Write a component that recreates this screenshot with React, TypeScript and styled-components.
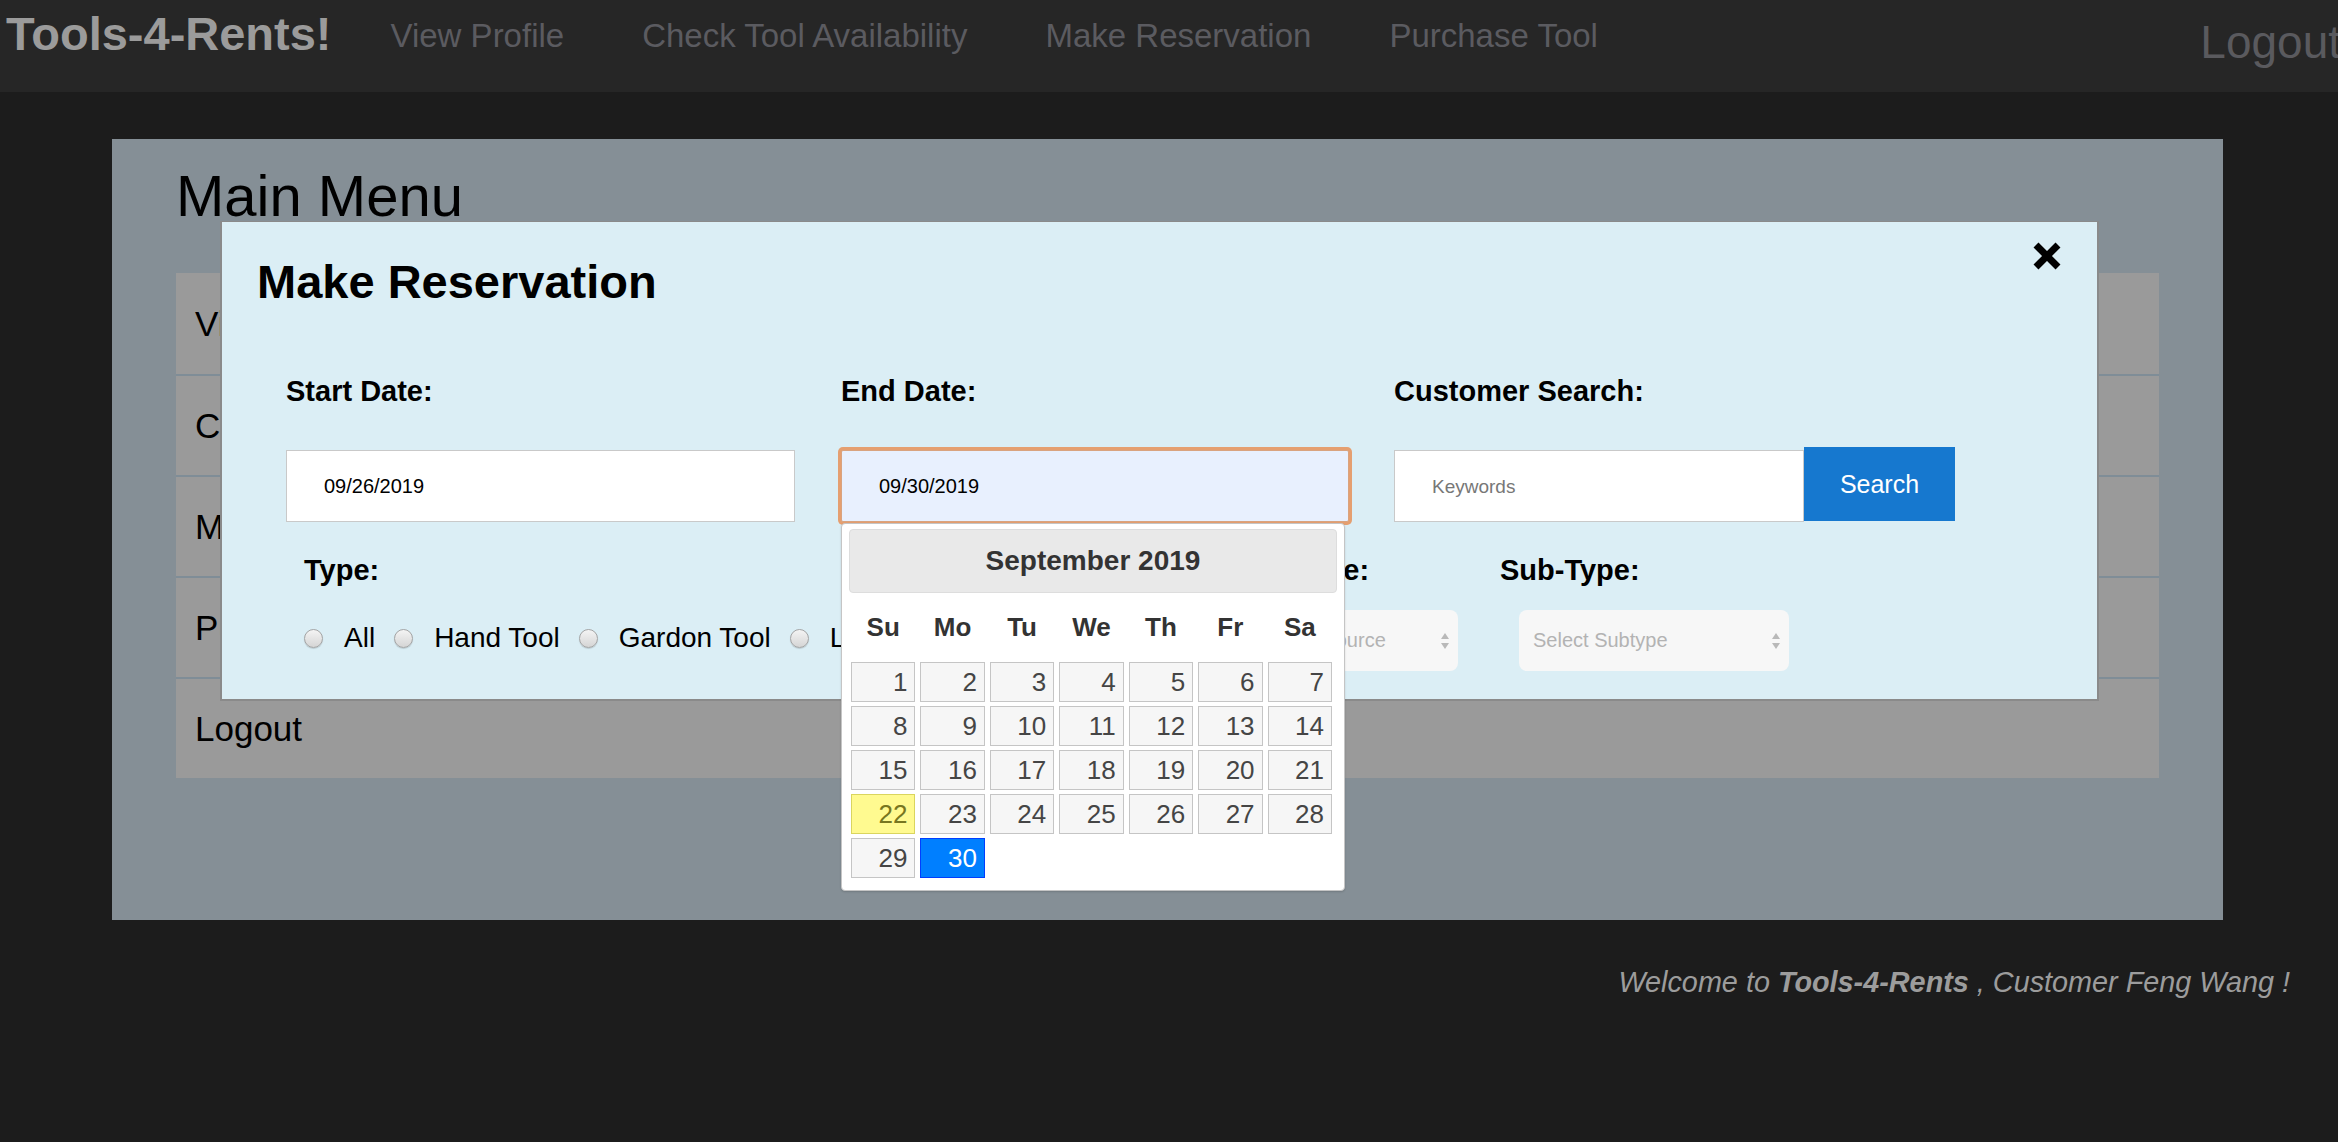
import styled, { createGlobalStyle } from 'styled-components';

const GlobalStyle = createGlobalStyle`
  html, body {
    margin: 0;
    padding: 0;
    background: #1c1c1c;
    overflow-x: hidden;
  }
  body {
    font-family: "Liberation Sans", Arial, Helvetica, sans-serif;
  }
  * {
    box-sizing: border-box;
  }
`;

const Page = styled.div`
  min-height: 100vh;
  background: #1c1c1c;
`;

const NavBar = styled.nav`
  display: flex;
  align-items: flex-start;
  height: 92px;
  background: #262626;
  overflow: hidden;
  white-space: nowrap;
`;

const Brand = styled.div`
  padding: 0 20px 0 6px;
  margin-top: 8px;
  font-size: 47px;
  line-height: 52px;
  font-weight: 700;
  color: #9b9b9b;
`;

const NavLink = styled.a`
  padding: 0 39px;
  margin-top: 18px;
  font-size: 33px;
  line-height: 36px;
  color: #5b5b60;
  text-decoration: none;
`;

const NavLogout = styled.a`
  margin-left: auto;
  margin-right: -3px;
  margin-top: 16px;
  font-size: 46px;
  line-height: 52px;
  color: #5a5a5e;
  text-decoration: none;
`;

const Main = styled.main`
  position: relative;
  padding-top: 47px;
`;

const Panel = styled.section`
  margin: 0 115px 0 112px;
  padding: 23px 64px 142px 64px;
  background: #858f96;
`;

const PanelTitle = styled.h1`
  margin: 0 0 44px 0;
  font-size: 58px;
  line-height: 67px;
  font-weight: 400;
  color: #000;
`;

const MenuList = styled.ul`
  list-style: none;
  margin: 0;
  padding: 0;
`;

const MenuItem = styled.li`
  display: flex;
  align-items: center;
  height: 101px;
  padding-left: 19px;
  background: #9a9a9a;
  font-size: 35px;
  color: #000;
  & + & {
    border-top: 2px solid #7f8d97;
  }
`;

const Welcome = styled.p`
  margin: 45px 0 0 0;
  padding-right: 48px;
  text-align: right;
  font-size: 28.8px;
  line-height: 34px;
  font-style: italic;
  color: #9c9c9c;
  b {
    font-weight: 700;
  }
`;

/* modal */

const Modal = styled.div`
  position: absolute;
  top: 129px;
  left: 220px;
  width: 1879px;
  height: 480px;
  padding-top: 33px;
  background: #dbeef5;
  border: 2px solid #8a8a8a;
  border-top-width: 1px;
`;

const ModalTitle = styled.h2`
  margin: 0 0 0 35px;
  font-size: 47px;
  line-height: 54px;
  font-weight: 700;
  color: #000;
`;

const CloseButton = styled.button`
  position: absolute;
  top: 19px;
  right: 35px;
  width: 30px;
  height: 30px;
  padding: 0;
  border: none;
  background: none;
  cursor: pointer;
  svg {
    display: block;
  }
`;

const FieldRow = styled.div`
  display: grid;
  grid-template-columns: 555px 553px 1fr;
  margin-top: 65px;
  padding-left: 64px;
`;

const Field = styled.div`
  position: relative;
`;

const Label = styled.div`
  font-size: 29px;
  line-height: 34px;
  font-weight: 700;
  color: #000;
`;

const TextInput = styled.input<{ $focused?: boolean; $width: number }>`
  display: block;
  width: ${(p) => p.$width}px;
  height: 72px;
  margin-top: 42px;
  padding: 0 0 0 37px;
  font-family: inherit;
  font-size: 20px;
  color: #000;
  background: ${(p) => (p.$focused ? '#e8f0fe' : '#fff')};
  border: 1px solid ${(p) => (p.$focused ? '#d9a37f' : '#c9c9c9')};
  border-radius: ${(p) => (p.$focused ? '2px' : '0')};
  box-shadow: ${(p) => (p.$focused ? '0 0 0 3px #e59f70' : 'none')};
  outline: none;
  &::placeholder {
    color: #777;
    font-size: 19px;
  }
`;

const SearchGroup = styled.div`
  display: flex;
  align-items: flex-start;
`;

const SearchButton = styled.button`
  width: 151px;
  height: 74px;
  margin-top: 39px;
  border: none;
  background: #1678cf;
  color: #fff;
  font-family: inherit;
  font-size: 25px;
  cursor: pointer;
`;

const FilterRow = styled.div`
  display: flex;
  margin-top: 31px;
  padding-left: 82px;
`;

const FilterGroup = styled.div<{ $width?: number }>`
  flex: ${(p) => (p.$width ? `0 0 ${p.$width}px` : '1 1 auto')};
  min-width: 0;
  white-space: nowrap;
`;

const RadioLine = styled.div`
  display: flex;
  align-items: center;
  margin-top: 34px;
  height: 34px;
`;

const Radio = styled.input.attrs({ type: 'radio' })`
  appearance: none;
  flex: 0 0 auto;
  width: 19px;
  height: 19px;
  margin: 0 21px 0 0;
  border: 1px solid #a4a4a4;
  border-radius: 50%;
  background: linear-gradient(#f4f4f4, #d5d5d5);
  box-shadow: 0 1px 1px rgba(0, 0, 0, 0.15);
`;

const RadioLabel = styled.label`
  margin-right: 19px;
  font-size: 28px;
  color: #000;
`;

const FakeSelect = styled.div<{ $width: number }>`
  display: flex;
  align-items: center;
  justify-content: space-between;
  width: ${(p) => p.$width}px;
  height: 61px;
  margin: 23px 0 0 19px;
  padding: 0 8px 0 14px;
  background: #f7f7f7;
  border-radius: 8px;
  font-size: 20px;
  color: #b3b3b3;
  overflow: hidden;
`;

/* datepicker */

const Calendar = styled.div`
  position: absolute;
  top: calc(100% + 1px);
  left: 0;
  width: 504px;
  padding: 5px 7px 12px 7px;
  background: #fff;
  border: 1px solid #c5c5c5;
  border-radius: 4px;
  box-shadow: 0 1px 2px rgba(0, 0, 0, 0.15);
  z-index: 5;
`;

const CalendarHeader = styled.div`
  height: 64px;
  display: flex;
  align-items: center;
  justify-content: center;
  background: #e9e9e9;
  border: 1px solid #dddddd;
  border-radius: 4px;
  font-size: 28px;
  font-weight: 700;
  color: #333;
`;

const CalendarGrid = styled.div`
  display: grid;
  grid-template-columns: repeat(7, 1fr);
  column-gap: 5px;
  row-gap: 4px;
  padding: 0 5px 0 2px;
`;

const DayName = styled.div`
  height: 52px;
  margin: 8px 0 5px 0;
  display: flex;
  align-items: center;
  justify-content: center;
  font-size: 26px;
  font-weight: 700;
  color: #333;
`;

const DayCell = styled.div<{ $state?: 'today' | 'active' }>`
  height: 40px;
  padding-right: 7px;
  text-align: right;
  font-size: 26px;
  line-height: 38px;
  border: 1px solid
    ${(p) => (p.$state === 'today' ? '#dad55e' : p.$state === 'active' ? '#003eff' : '#c5c5c5')};
  background: ${(p) => (p.$state === 'today' ? '#fffa90' : p.$state === 'active' ? '#007fff' : '#f6f6f6')};
  color: ${(p) => (p.$state === 'today' ? '#777620' : p.$state === 'active' ? '#fff' : '#454545')};
`;

const menuItems = ['View Profile', 'Check Tool Availability', 'Make Reservation', 'Purchase Tool', 'Logout'];
const navItems = ['View Profile', 'Check Tool Availability', 'Make Reservation', 'Purchase Tool'];
const dayNames = ['Su', 'Mo', 'Tu', 'We', 'Th', 'Fr', 'Sa'];
const toolTypes = ['All', 'Hand Tool', 'Gardon Tool', 'Ladder Tool', 'Power Tool'];

const SelectArrows = () => (
  <svg width="10" height="18" viewBox="0 0 10 18">
    <path d="M5 1 L9 7 H1 Z" fill="#b9b9b9" />
    <path d="M5 17 L9 11 H1 Z" fill="#b9b9b9" />
  </svg>
);

const DatePicker = () => {
  const days = Array.from({ length: 30 }, (_, i) => i + 1);
  return (
    <Calendar>
      <CalendarHeader>September 2019</CalendarHeader>
      <CalendarGrid>
        {dayNames.map((d) => (
          <DayName key={d}>{d}</DayName>
        ))}
        {days.map((d) => (
          <DayCell key={d} $state={d === 22 ? 'today' : d === 30 ? 'active' : undefined}>
            {d}
          </DayCell>
        ))}
      </CalendarGrid>
    </Calendar>
  );
};

const App = () => {
  return (
    <Page>
      <GlobalStyle />
      <NavBar>
        <Brand>Tools-4-Rents!</Brand>
        {navItems.map((item) => (
          <NavLink key={item} href="#">
            {item}
          </NavLink>
        ))}
        <NavLogout href="#">Logout</NavLogout>
      </NavBar>

      <Main>
        <Panel>
          <PanelTitle>Main Menu</PanelTitle>
          <MenuList>
            {menuItems.map((item) => (
              <MenuItem key={item}>{item}</MenuItem>
            ))}
          </MenuList>
        </Panel>

        <Welcome>
          Welcome to <b>Tools-4-Rents</b> , Customer Feng Wang !
        </Welcome>

        <Modal>
          <ModalTitle>Make Reservation</ModalTitle>
          <CloseButton aria-label="close">
            <svg width="30" height="30" viewBox="0 0 30 30">
              <path d="M4 4 L26 26 M26 4 L4 26" stroke="#000" strokeWidth="7" strokeLinecap="butt" />
            </svg>
          </CloseButton>

          <FieldRow>
            <Field>
              <Label>Start Date:</Label>
              <TextInput $width={509} defaultValue="09/26/2019" />
            </Field>
            <Field>
              <Label>End Date:</Label>
              <TextInput $width={508} $focused defaultValue="09/30/2019" />
              <DatePicker />
            </Field>
            <Field>
              <Label>Customer Search:</Label>
              <SearchGroup>
                <TextInput $width={410} placeholder="Keywords" />
                <SearchButton>Search</SearchButton>
              </SearchGroup>
            </Field>
          </FieldRow>

          <FilterRow>
            <FilterGroup $width={862}>
              <Label>Type:</Label>
              <RadioLine>
                {toolTypes.map((t) => (
                  <span key={t} style={{ display: 'contents' }}>
                    <Radio name="type" id={t} />
                    <RadioLabel htmlFor={t}>{t}</RadioLabel>
                  </span>
                ))}
              </RadioLine>
            </FilterGroup>
            <FilterGroup $width={334}>
              <Label>Power Source:</Label>
              <FakeSelect $width={273}>
                <span>Select Power Source</span>
                <SelectArrows />
              </FakeSelect>
            </FilterGroup>
            <FilterGroup>
              <Label>Sub-Type:</Label>
              <FakeSelect $width={270}>
                <span>Select Subtype</span>
                <SelectArrows />
              </FakeSelect>
            </FilterGroup>
          </FilterRow>
        </Modal>
      </Main>
    </Page>
  );
};

export default App;
